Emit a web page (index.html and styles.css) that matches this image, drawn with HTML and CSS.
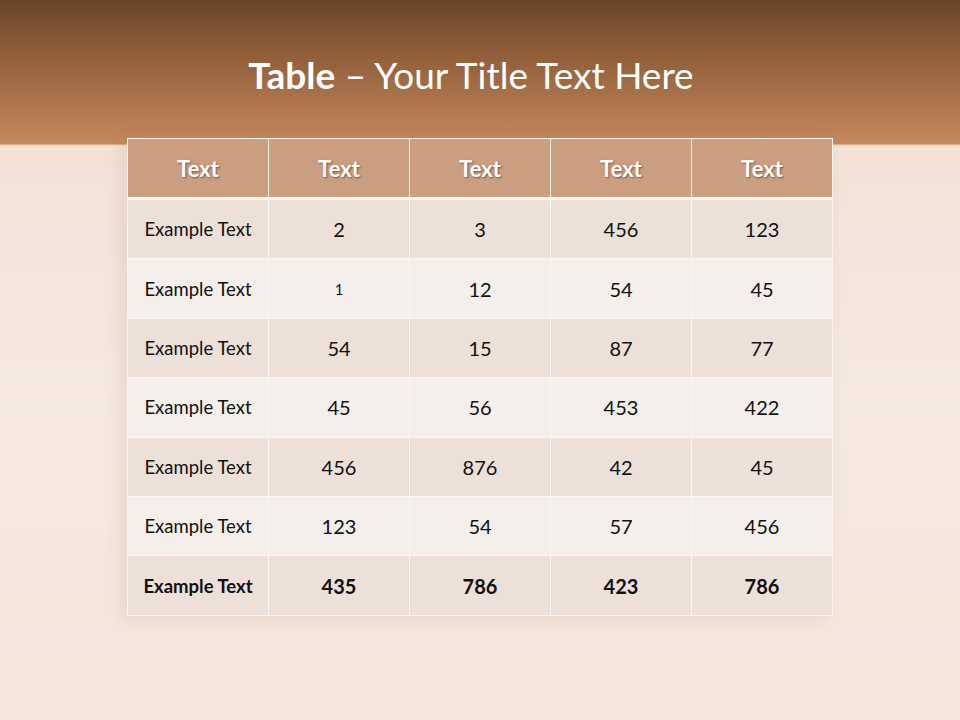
FILE: index.html
```html
<!DOCTYPE html>
<html>
<head>
<meta charset="utf-8">
<link rel="stylesheet" href="styles.css">
</head>
<body>
<div class="slide">
  <h1 class="title"><b>Table</b> – Your Title Text Here</h1>
  <table class="data">
    <thead>
      <tr><th>Text</th><th>Text</th><th>Text</th><th>Text</th><th>Text</th></tr>
    </thead>
    <tbody>
      <tr><td class="label">Example Text</td><td>2</td><td>3</td><td>456</td><td>123</td></tr>
      <tr><td class="label">Example Text</td><td class="small">1</td><td>12</td><td>54</td><td>45</td></tr>
      <tr><td class="label">Example Text</td><td>54</td><td>15</td><td>87</td><td>77</td></tr>
      <tr><td class="label">Example Text</td><td>45</td><td>56</td><td>453</td><td>422</td></tr>
      <tr><td class="label">Example Text</td><td>456</td><td>876</td><td>42</td><td>45</td></tr>
      <tr><td class="label">Example Text</td><td>123</td><td>54</td><td>57</td><td>456</td></tr>
      <tr class="total"><td class="label">Example Text</td><td>435</td><td>786</td><td>423</td><td>786</td></tr>
    </tbody>
  </table>
</div>
</body>
</html>
```

FILE: styles.css
```css
html, body {
  margin: 0;
  padding: 0;
}
body {
  width: 960px;
  height: 720px;
  overflow: hidden;
  font-family: Lato, "Open Sans", sans-serif;
  background:
    linear-gradient(to bottom, #69452a 0px, #8a5a35 45px, #a8714a 95px, #c48a5d 144px, #eed2c0 145px, #f4e2d8 147px, #f6e9e1 400px, #f6e6dc 720px);
}
.slide {
  display: flex;
  flex-direction: column;
  align-items: center;
}
.title {
  margin: 0;
  height: 138px;
  box-sizing: border-box;
  padding-top: 51px;
  padding-right: 18px;
  font-size: 37px;
  line-height: 48px;
  font-weight: 400;
  color: #ffffff;
  text-align: center;
}
.title b {
  font-weight: 700;
}
.data {
  border-collapse: collapse;
  table-layout: fixed;
  width: 704px;
  box-shadow: -6px 4px 18px rgba(120, 80, 60, 0.12);
}
.data th, .data td {
  width: 140px;
  border: 1px solid #fbf6f2;
  text-align: center;
  padding: 0;
  color: #111111;
}
.data th {
  height: 58px;
  background: #cb9e80;
  color: #ffffff;
  font-size: 22px;
  font-weight: 700;
  text-shadow: 1px 1px 2px rgba(60, 30, 10, 0.55);
  border-bottom: 3px solid #fbf6f2;
}
.data td {
  height: 58.4px;
  font-size: 20px;
}
.data tbody tr:nth-child(odd) td {
  background: #ede0d8;
}
.data tbody tr:nth-child(even) td {
  background: #f4efeb;
}
.data td.label {
  font-size: 18.5px;
}
.data td.small {
  font-size: 15px;
}
.data tr.total td {
  font-weight: 700;
}
```
